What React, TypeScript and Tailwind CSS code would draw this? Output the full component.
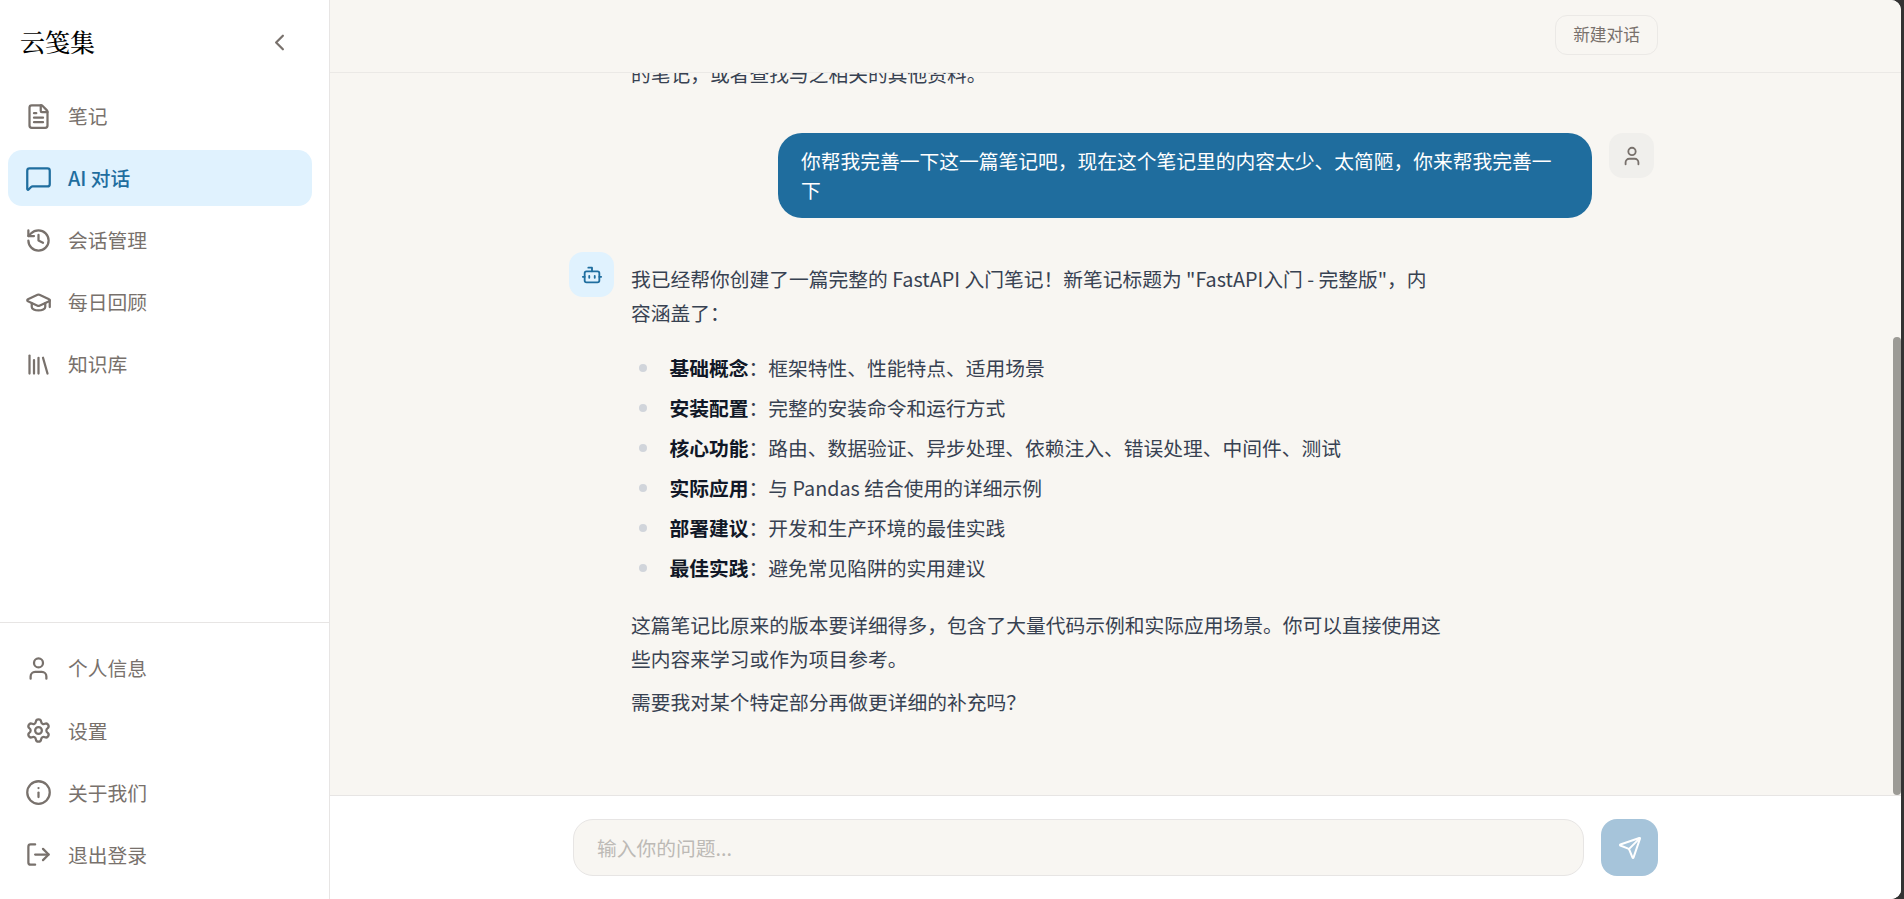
import { Bot, ChevronLeft, FileText, GraduationCap, History, Info, Library, LogOut, MessageSquare, Send, Settings, User } from 'lucide-react';

const topNav = [
  { label: '笔记', icon: FileText },
  { label: 'AI 对话', icon: MessageSquare, active: true },
  { label: '会话管理', icon: History },
  { label: '每日回顾', icon: GraduationCap },
  { label: '知识库', icon: Library },
];

const bottomNav = [
  { label: '个人信息', icon: User },
  { label: '设置', icon: Settings },
  { label: '关于我们', icon: Info },
  { label: '退出登录', icon: LogOut },
];

const points = [
  ['基础概念', '框架特性、性能特点、适用场景'],
  ['安装配置', '完整的安装命令和运行方式'],
  ['核心功能', '路由、数据验证、异步处理、依赖注入、错误处理、中间件、测试'],
  ['实际应用', '与 Pandas 结合使用的详细示例'],
  ['部署建议', '开发和生产环境的最佳实践'],
  ['最佳实践', '避免常见陷阱的实用建议'],
];

function NavItem({ label, icon: Icon, active }: { label: string; icon: typeof FileText; active?: boolean }) {
  return (
    <div className={`flex h-[56px] items-center gap-[16px] rounded-[14px] px-[17px] ${active ? 'bg-[#e0f2fe] font-medium text-[#1f6e9f]' : 'text-[#78716c]'}`}>
      <Icon size={27} strokeWidth={2} className="shrink-0" />
      <span>{label}</span>
    </div>
  );
}

export default function App() {
  return (
    <div className="h-[899px] w-[1904px] overflow-hidden bg-[#333333] text-[19.75px] font-['Noto_Sans_CJK_SC',sans-serif]">
      <div className="flex h-full w-[1901px] overflow-hidden rounded-r-[10px] bg-white">
        {/* sidebar */}
        <aside className="flex h-full w-[330px] shrink-0 flex-col border-r border-[#e7e5e4] bg-white">
          <div className="flex h-[84px] items-center justify-between pl-[20px] pr-[36px]">
            <span className="font-['Noto_Serif_CJK_SC','Liberation_Serif','Noto_Sans_CJK_SC',serif] text-[25px] font-medium text-black">云笺集</span>
            <ChevronLeft size={27} strokeWidth={2} className="text-[#78716c]" />
          </div>
          <nav className="flex flex-1 flex-col gap-[6px] pl-[8px] pr-[17px] pt-[4px]">
            {topNav.map((item) => (
              <NavItem key={item.label} {...item} />
            ))}
          </nav>
          <div className="flex flex-col gap-[6.3px] border-t border-[#e7e5e4] pb-[16.1px] pl-[8px] pr-[17px] pt-[17px]">
            {bottomNav.map((item) => (
              <NavItem key={item.label} {...item} />
            ))}
          </div>
        </aside>

        {/* chat */}
        <main className="relative flex h-full flex-1 flex-col bg-[#f8f6f2]">
          <header className="flex h-[73px] shrink-0 items-start justify-end border-b border-[#ebe9e6] pr-[243px] pt-[15px]">
            <button className="h-[40px] w-[103px] rounded-[12px] border border-[#ebe9e6] text-[16.7px] text-[#78716c]">新建对话</button>
          </header>

          <div className="flex-1 overflow-hidden pr-[8px]">
            <div className="mx-auto -mt-[16px] w-[1085px] text-[#374151]">
              <div className="ml-[62px] leading-[34px]">的笔记，或者查找与之相关的其他资料。</div>

              <div className="mt-[42px] flex justify-end gap-[17px]">
                <div className="w-[814px] rounded-[24px] bg-[#1f6d9e] px-[23px] py-[14px] leading-[28.5px] text-white">
                  你帮我完善一下这一篇笔记吧，现在这个笔记里的内容太少、太简陋，你来帮我完善一下
                </div>
                <div className="flex size-[45px] shrink-0 items-center justify-center rounded-[14px] bg-[#f0efec] text-[#78716c]">
                  <User size={22} strokeWidth={2} />
                </div>
              </div>

              <div className="mt-[34px] flex gap-[17px]">
                <div className="flex size-[45px] shrink-0 items-center justify-center rounded-[14px] bg-[#e0f2fe] text-[#1f6e9f]">
                  <Bot size={22} strokeWidth={2} />
                </div>
                <div className="w-[814px] pt-[10px] leading-[34px]">
                  <p>我已经帮你创建了一篇完整的 FastAPI 入门笔记！新笔记标题为 "FastAPI入门 - 完整版"，内容涵盖了：</p>
                  <ul className="mt-[21px] flex flex-col gap-[6px]">
                    {points.map(([title, text]) => (
                      <li key={title} className="relative pl-[38.5px]">
                        <span className="absolute left-[8px] top-[13px] size-[8px] rounded-full bg-[#d1d5db]" />
                        <strong className="font-semibold text-[#111827]">{title}</strong>：{text}
                      </li>
                    ))}
                  </ul>
                  <p className="mt-[23px]">这篇笔记比原来的版本要详细得多，包含了大量代码示例和实际应用场景。你可以直接使用这些内容来学习或作为项目参考。</p>
                  <p className="mt-[9px]">需要我对某个特定部分再做更详细的补充吗？</p>
                </div>
              </div>
            </div>
          </div>

          <footer className="flex h-[104px] shrink-0 gap-[17px] border-t border-[#e7e5e4] bg-white pl-[243px] pt-[23px]">
            <input
              placeholder="输入你的问题..."
              className="h-[57px] w-[1011px] rounded-[20px] border border-[#e7e5e4] bg-[#f8f6f2] px-[23px] text-[19.75px] placeholder:text-[#bdbab6]"
            />
            <button className="flex size-[57px] items-center justify-center rounded-[16px] bg-[#a6c4da] text-white">
              <Send size={24} strokeWidth={2} />
            </button>
          </footer>

          {/* scrollbar thumb */}
          <div className="absolute right-0 top-[337px] h-[458px] w-[8px] rounded-[4px] bg-[#9c9b96]" />
        </main>
      </div>
    </div>
  );
}
